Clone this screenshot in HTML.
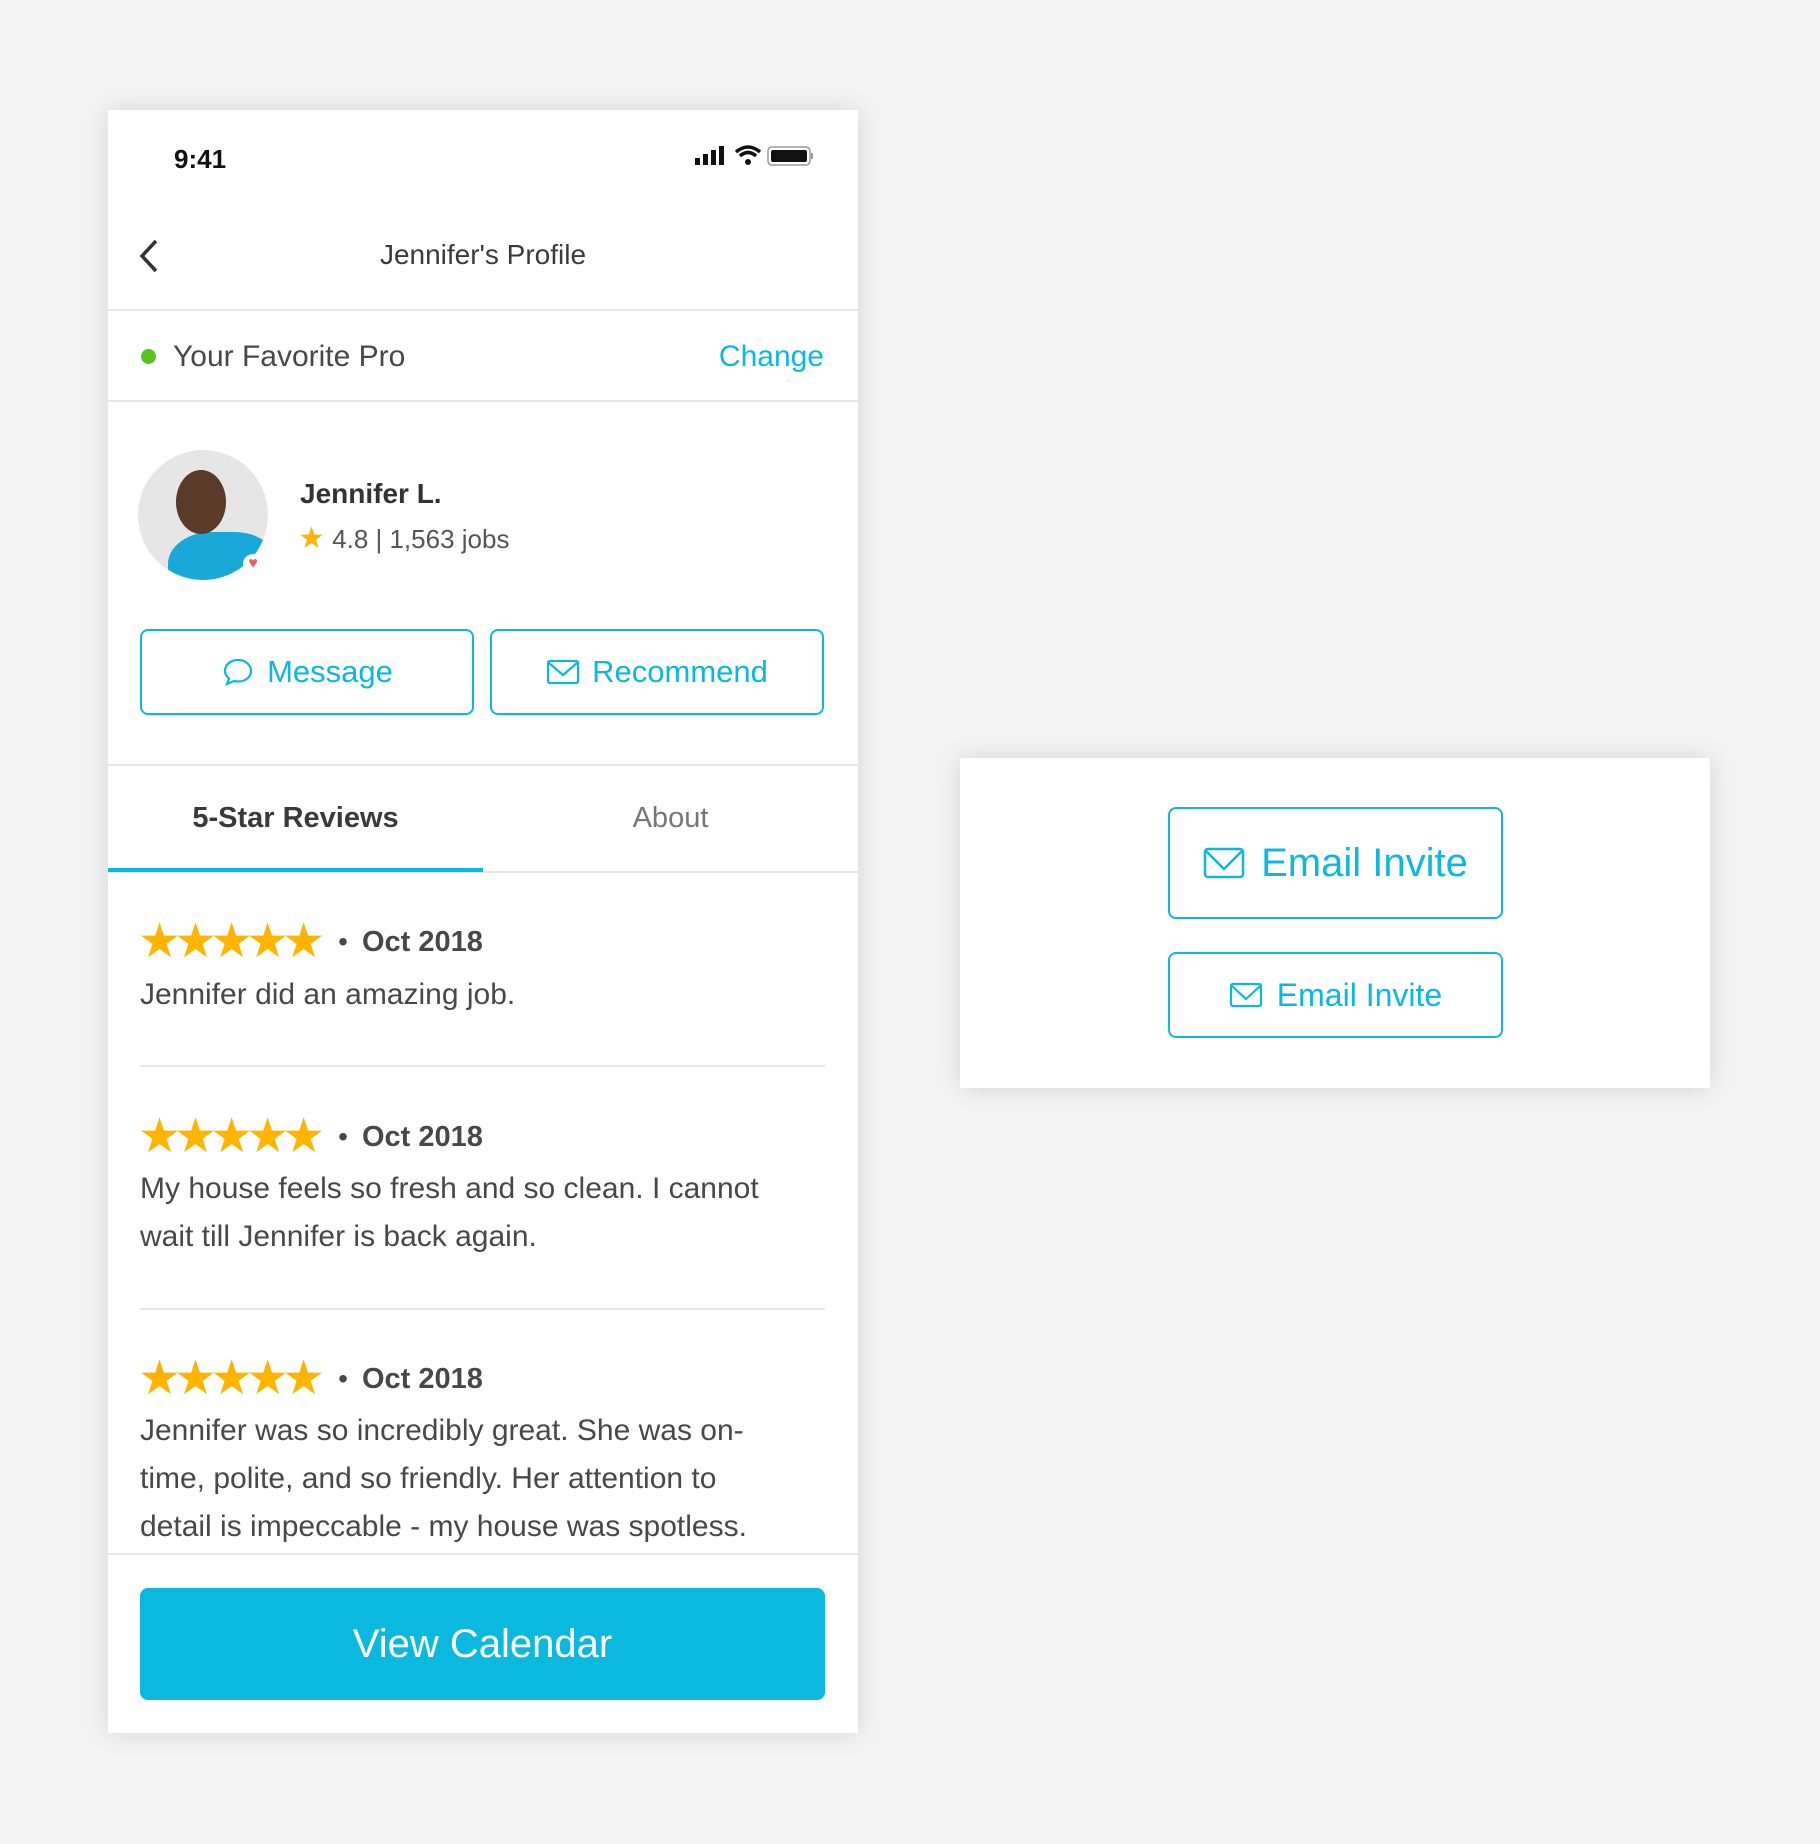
<!DOCTYPE html>
<html><head><meta charset="utf-8"><style>
*{margin:0;padding:0;box-sizing:border-box}
body{width:1820px;height:1844px;background:#f3f3f3;font-family:"Liberation Sans",sans-serif;color:#484848;position:relative;overflow:hidden}
.a{position:absolute}
.phone{left:108px;top:110px;width:750px;height:1623px;background:#fff;box-shadow:0 0 24px rgba(0,0,0,.12);overflow:hidden}
.card{left:960px;top:758px;width:750px;height:330px;background:#fff;box-shadow:0 0 24px rgba(0,0,0,.12)}
.hr{position:absolute;height:2px;background:#e3e7ea}
.btn{position:absolute;border:2px solid #0bb8e0;border-radius:8px;color:#0bb8e0;display:flex;align-items:center;justify-content:center;gap:12px}
.t{position:absolute;white-space:nowrap;line-height:1}
.stars{position:absolute;left:30px;display:flex;align-items:center}
.st{color:#ffb400;font-size:48px;letter-spacing:-7px;line-height:40px}
.rev{position:absolute;left:32px;font-size:30px;line-height:48px;width:645px}
.date{font-weight:bold;font-size:29px;line-height:40px}
</style></head><body>
<div class="a phone">
  <div class="t" style="left:66px;top:36px;font-size:26px;font-weight:bold;color:#111">9:41</div>
  <svg class="a" style="left:585px;top:34px" width="120" height="24" viewBox="0 0 120 24">
    <rect x="2" y="14" width="5" height="7" fill="#111"/><rect x="10" y="10" width="5" height="11" fill="#111"/><rect x="18" y="6" width="5" height="15" fill="#111"/><rect x="26" y="2" width="5" height="19" fill="#111"/>
    <path d="M43 8 Q55 -2 67 8" stroke="#111" stroke-width="3.5" fill="none"/><path d="M47 12 Q55 5 63 12" stroke="#111" stroke-width="3.5" fill="none"/><circle cx="55" cy="18" r="3" fill="#111"/>
    <rect x="75" y="3" width="42" height="18" rx="4" fill="none" stroke="#999" stroke-width="1.5"/><rect x="78" y="6" width="36" height="12" rx="2" fill="#111"/><rect x="118" y="9" width="2" height="6" fill="#999"/>
  </svg>
  <svg class="a" style="left:30px;top:128px" width="22" height="36" viewBox="0 0 22 36"><path d="M18 3 L4 18 L18 33" stroke="#333" stroke-width="3.5" fill="none"/></svg>
  <div class="t" style="left:0;width:750px;text-align:center;top:131px;font-size:28px;color:#3a3a3a">Jennifer's Profile</div>
  <div class="hr" style="left:0;width:750px;top:199px"></div>
  <div class="a" style="left:33px;top:239px;width:15px;height:15px;border-radius:50%;background:#58c322"></div>
  <div class="t" style="left:65px;top:232px;font-size:30px">Your Favorite Pro</div>
  <div class="t" style="right:34px;top:232px;font-size:30px;color:#0bb8e0">Change</div>
  <div class="hr" style="left:0;width:750px;top:290px"></div>
  <div class="a" style="left:30px;top:340px;width:130px;height:130px;border-radius:50%;background:#e6e6e6;overflow:hidden">
    <div class="a" style="left:30px;top:82px;width:110px;height:80px;border-radius:40% 40% 0 0;background:#1aa8d8"></div>
    <div class="a" style="left:38px;top:20px;width:50px;height:64px;border-radius:50%;background:#5a3a28"></div>
  </div>
  <div class="a" style="left:135px;top:444px;width:20px;height:20px;border-radius:50%;background:#fff;color:#f05a5a;font-size:16px;text-align:center;line-height:20px">♥</div>
  <div class="t" style="left:192px;top:370px;font-size:28px;font-weight:bold;color:#333">Jennifer L.</div>
  <div class="t" style="left:190px;top:414px;font-size:26px;color:#555"><span style="color:#ffb400;font-size:30px">★</span> 4.8 | 1,563 jobs</div>
  <div class="btn" style="left:32px;top:519px;width:334px;height:86px;font-size:31px"><svg width="34" height="30" viewBox="0 0 34 30"><path d="M17 3C9 3 4 8 4 14c0 3 1.5 5.5 4 7.5L6 27l7-3c1.3.3 2.6.5 4 .5 8 0 13-5 13-10.5S25 3 17 3z" fill="none" stroke="#0bb8e0" stroke-width="2.2"/></svg>Message</div>
  <div class="btn" style="left:382px;top:519px;width:334px;height:86px;font-size:31px"><svg width="34" height="26" viewBox="0 0 34 26"><rect x="2" y="2" width="30" height="22" rx="2" fill="none" stroke="#0bb8e0" stroke-width="2.2"/><path d="M3 4 L17 16 L31 4" fill="none" stroke="#0bb8e0" stroke-width="2.2"/></svg>Recommend</div>
  <div class="hr" style="left:0;width:750px;top:654px"></div>
  <div class="t" style="left:0;width:375px;text-align:center;top:694px;font-size:29px;font-weight:bold;color:#3a3a3a">5-Star Reviews</div>
  <div class="t" style="left:375px;width:375px;text-align:center;top:694px;font-size:29px;color:#777">About</div>
  <div class="hr" style="left:0;width:750px;top:761px"></div>
  <div class="a" style="left:0;top:758px;width:375px;height:4px;background:#0bb8e0"></div>

  <div class="stars" style="top:812px"><span class="st">★★★★★</span><span style="font-size:28px;line-height:40px;margin:0 14px 0 20px">•</span><span class="date">Oct 2018</span></div>
  <div class="rev" style="top:861px">Jennifer did an amazing job.</div>
  <div class="hr" style="left:32px;width:685px;top:955px"></div>

  <div class="stars" style="top:1007px"><span class="st">★★★★★</span><span style="font-size:28px;line-height:40px;margin:0 14px 0 20px">•</span><span class="date">Oct 2018</span></div>
  <div class="rev" style="top:1055px">My house feels so fresh and so clean. I cannot wait till Jennifer is back again.</div>
  <div class="hr" style="left:32px;width:685px;top:1198px"></div>

  <div class="stars" style="top:1249px"><span class="st">★★★★★</span><span style="font-size:28px;line-height:40px;margin:0 14px 0 20px">•</span><span class="date">Oct 2018</span></div>
  <div class="rev" style="top:1297px;width:630px">Jennifer was so incredibly great. She was on-time, polite, and so friendly. Her attention to detail is impeccable - my house was spotless.</div>

  <div class="a" style="left:0;top:1443px;width:750px;height:180px;background:#fff;border-top:2px solid #e3e7ea"></div>
  <div class="a" style="left:32px;top:1478px;width:685px;height:112px;background:#0bb8e0;border-radius:8px;color:#fff;font-size:40px;display:flex;align-items:center;justify-content:center">View Calendar</div>
</div>
<div class="a card">
  <div class="btn" style="left:208px;top:49px;width:335px;height:112px;font-size:40px;gap:16px"><svg width="42" height="32" viewBox="0 0 42 32"><rect x="2" y="2" width="38" height="28" rx="3" fill="none" stroke="#0bb8e0" stroke-width="2.5"/><path d="M3 4 L21 22 L39 4" fill="none" stroke="#0bb8e0" stroke-width="2.5"/></svg>Email Invite</div>
  <div class="btn" style="left:208px;top:194px;width:335px;height:86px;font-size:32px;gap:14px"><svg width="34" height="26" viewBox="0 0 34 26"><rect x="2" y="2" width="30" height="22" rx="2" fill="none" stroke="#0bb8e0" stroke-width="2.2"/><path d="M3 4 L17 17 L31 4" fill="none" stroke="#0bb8e0" stroke-width="2.2"/></svg>Email Invite</div>
</div>
</body></html>
